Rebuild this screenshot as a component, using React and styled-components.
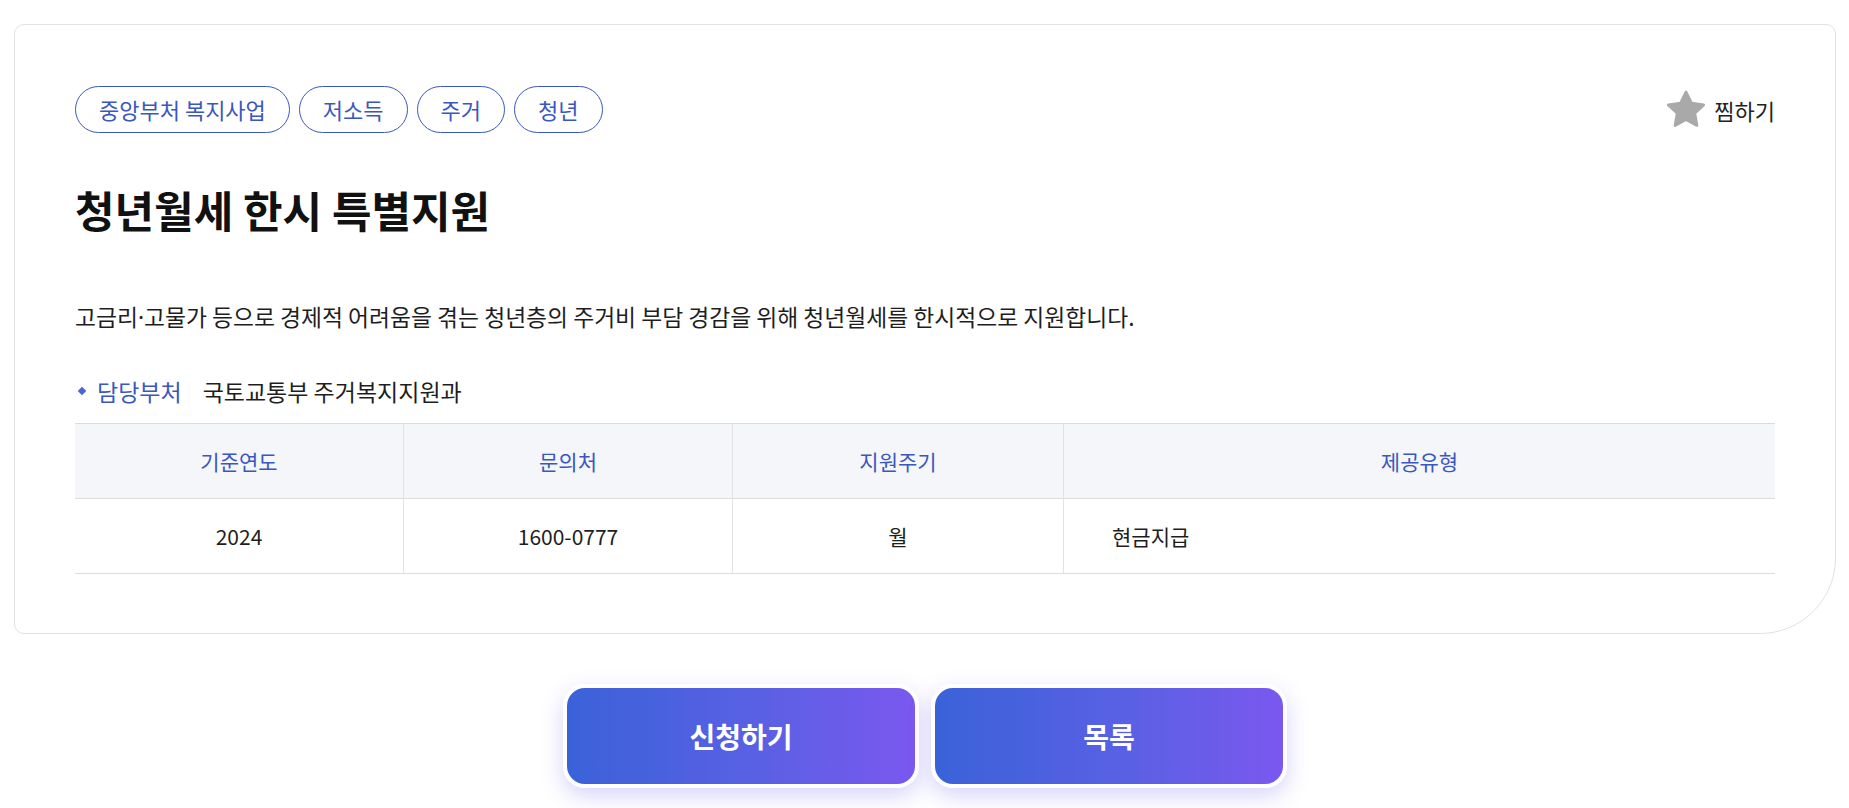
import styled, { createGlobalStyle } from "styled-components";

const GlobalStyle = createGlobalStyle`
  body {
    margin: 0;
    background: #ffffff;
    font-family: "Noto Sans CJK KR", "Noto Sans", sans-serif;
    color: #222;
  }
`;

const Page = styled.div`
  padding: 24px 13px 40px 14px;
`;

const Card = styled.section`
  border: 1px solid #e2e2e2;
  border-radius: 10px 10px 76px 10px;
  padding: 61px 60px 59px 60px;
  background: #fff;
`;

const TopRow = styled.div`
  display: flex;
  justify-content: space-between;
  align-items: center;
`;

const TagList = styled.div`
  display: flex;
  gap: 9px;
`;

const Tag = styled.span`
  display: inline-block;
  padding: 9px 23px;
  border: 1px solid #3a57c0;
  border-radius: 24px;
  color: #3a57c0;
  font-size: 22px;
  line-height: 27px;
`;

const Bookmark = styled.button`
  display: flex;
  align-items: center;
  gap: 6px;
  border: none;
  background: none;
  padding: 0;
  font-family: inherit;
  font-size: 22px;
  color: #222;
  cursor: pointer;
`;

const Title = styled.h1`
  margin: 50px 0 0;
  font-size: 43px;
  line-height: 52px;
  font-weight: 700;
  color: #111;
`;

const Description = styled.p`
  margin: 67px 0 0;
  font-size: 22.8px;
  line-height: 30px;
  color: #1e1e1e;
`;

const Dot = styled.span`
  font-family: "Noto Sans", sans-serif;
`;

const InfoRow = styled.div`
  margin-top: 43px;
  display: flex;
  align-items: center;
  font-size: 23px;
  line-height: 30px;
`;

const Diamond = styled.span`
  width: 6px;
  height: 6px;
  background: #4a66d4;
  transform: rotate(45deg);
  margin: 0 12px 0 4px;
`;

const InfoLabel = styled.span`
  color: #3a57c0;
  margin-right: 21px;
`;

const InfoValue = styled.span`
  color: #1e1e1e;
`;

const Table = styled.div`
  margin-top: 17px;
  display: grid;
  grid-template-columns: 329px 329px 331px 1fr;
  border-top: 1px solid #dcdcdc;
`;

const Cell = styled.div`
  height: 74px;
  display: flex;
  align-items: center;
  justify-content: ${(p) => (p.$left ? "flex-start" : "center")};
  padding-left: ${(p) => (p.$left ? "48px" : "0")};
  border-bottom: 1px solid #dcdcdc;
  border-right: ${(p) => (p.$last ? "none" : "1px solid #e2e2e2")};
  background: ${(p) => (p.$head ? "#f5f6fa" : "#fff")};
  color: ${(p) => (p.$head ? "#3a57c0" : "#1e1e1e")};
  font-size: 21px;
`;

const Actions = styled.div`
  display: flex;
  justify-content: center;
  gap: 12px;
  margin-top: 50px;
`;

const ActionButton = styled.button`
  width: 356px;
  height: 104px;
  border: 4px solid #fff;
  border-radius: 22px;
  background: linear-gradient(90deg, #3a62d8 0%, #5a60e4 55%, #7a58ef 100%);
  color: #fff;
  font-family: inherit;
  font-size: 28px;
  font-weight: 700;
  box-shadow: 0 8px 22px rgba(110, 100, 240, 0.28);
  cursor: pointer;
`;

const StarIcon = () => (
  <svg width="44" height="44" viewBox="0 0 24 24">
    <path
      d="M12 2.2l2.95 6.1 6.65.9-4.85 4.6 1.2 6.6L12 17.2l-5.95 3.2 1.2-6.6L2.4 9.2l6.65-.9z"
      fill="#a9a9a9"
      stroke="#a9a9a9"
      strokeWidth="1.6"
      strokeLinejoin="round"
    />
  </svg>
);

const tags = ["중앙부처 복지사업", "저소득", "주거", "청년"];
const heads = ["기준연도", "문의처", "지원주기", "제공유형"];
const values = ["2024", "1600-0777", "월", "현금지급"];

const App = () => {
  return (
    <Page>
      <GlobalStyle />
      <Card>
        <TopRow>
          <TagList>
            {tags.map((t) => (
              <Tag key={t}>{t}</Tag>
            ))}
          </TagList>
          <Bookmark>
            <StarIcon />
            찜하기
          </Bookmark>
        </TopRow>

        <Title>청년월세 한시 특별지원</Title>

        <Description>
          고금리<Dot>·</Dot>고물가 등으로 경제적 어려움을 겪는 청년층의 주거비
          부담 경감을 위해 청년월세를 한시적으로 지원합니다.
        </Description>

        <InfoRow>
          <Diamond />
          <InfoLabel>담당부처</InfoLabel>
          <InfoValue>국토교통부 주거복지지원과</InfoValue>
        </InfoRow>

        <Table>
          {heads.map((h, i) => (
            <Cell key={h} $head $last={i === 3}>
              {h}
            </Cell>
          ))}
          {values.map((v, i) => (
            <Cell key={v} $last={i === 3} $left={i === 3}>
              {v}
            </Cell>
          ))}
        </Table>
      </Card>

      <Actions>
        <ActionButton>신청하기</ActionButton>
        <ActionButton>목록</ActionButton>
      </Actions>
    </Page>
  );
};

export default App;
